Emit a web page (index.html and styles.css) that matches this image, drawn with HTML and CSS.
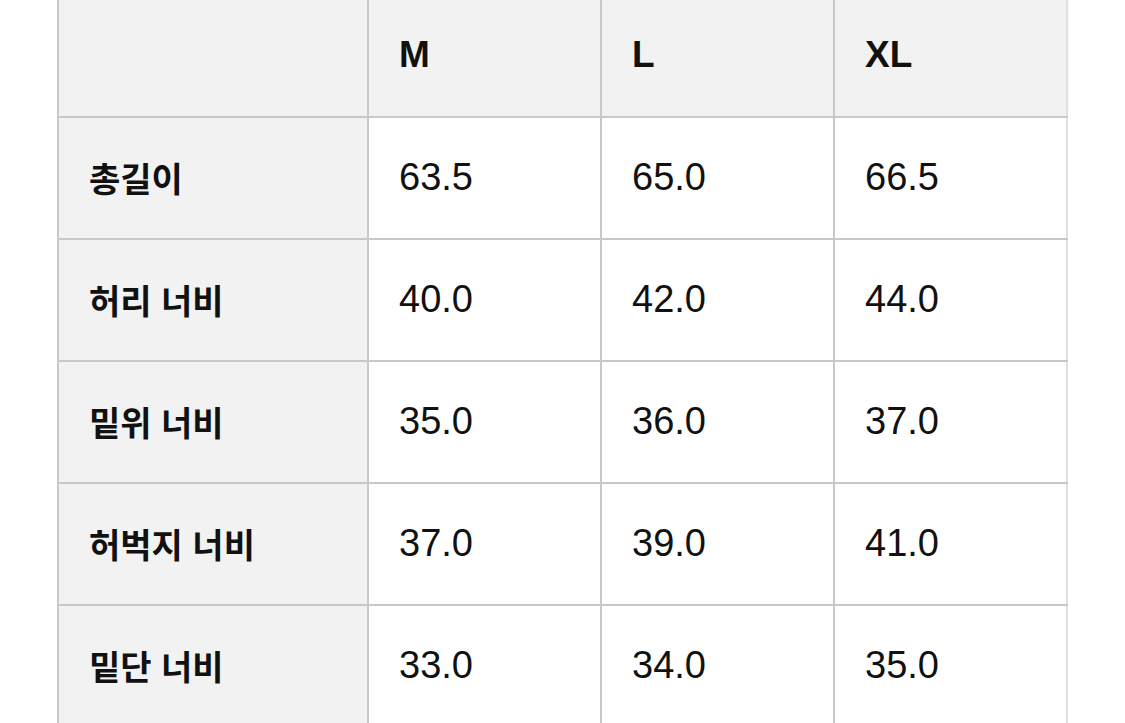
FILE: index.html
```html
<!DOCTYPE html>
<html lang="ko">
<head>
<meta charset="utf-8">
<link rel="stylesheet" href="styles.css">
</head>
<body>
<table class="size-table">
  <colgroup>
    <col class="col-label">
    <col class="col-size">
    <col class="col-size">
    <col class="col-size">
  </colgroup>
  <thead>
    <tr>
      <th class="corner"></th>
      <th class="size-head">M</th>
      <th class="size-head">L</th>
      <th class="size-head">XL</th>
    </tr>
  </thead>
  <tbody>
    <tr><th class="label">총길이</th><td>63.5</td><td>65.0</td><td>66.5</td></tr>
    <tr><th class="label">허리 너비</th><td>40.0</td><td>42.0</td><td>44.0</td></tr>
    <tr><th class="label">밑위 너비</th><td>35.0</td><td>36.0</td><td>37.0</td></tr>
    <tr><th class="label">허벅지 너비</th><td>37.0</td><td>39.0</td><td>41.0</td></tr>
    <tr><th class="label">밑단 너비</th><td>33.0</td><td>34.0</td><td>35.0</td></tr>
  </tbody>
</table>
</body>
</html>
```
FILE: styles.css
```css
html, body {
  margin: 0;
  padding: 0;
  background: #ffffff;
  overflow: hidden;
}
body {
  font-family: "Liberation Sans", "Noto Sans CJK KR", sans-serif;
  color: #111111;
}
.size-table {
  border-collapse: collapse;
  table-layout: fixed;
  width: 1011px;
  margin-left: 57px;
  margin-top: -6px;
}
.col-label { width: 310px; }
.col-size { width: 233px; }
.size-table th,
.size-table td {
  border: 2px solid #c8c8c8;
  height: 118px;
  padding: 0 0 2px 30px;
  text-align: left;
  vertical-align: middle;
  box-sizing: border-box;
}
.size-table tr { height: 122px; }
.size-table th:last-child,
.size-table td:last-child {
  border-right-color: #e0e0e0;
}
.corner,
.size-head,
.label {
  background: #f2f2f2;
}
.size-head {
  font-size: 37px;
  font-weight: 700;
}
.label {
  font-family: "Noto Sans CJK KR", sans-serif;
  font-size: 34px;
  font-weight: 700;
  padding-left: 29px;
  padding-bottom: 4px;
}
.size-table td {
  font-size: 38px;
  font-weight: 400;
  background: #ffffff;
}
```
